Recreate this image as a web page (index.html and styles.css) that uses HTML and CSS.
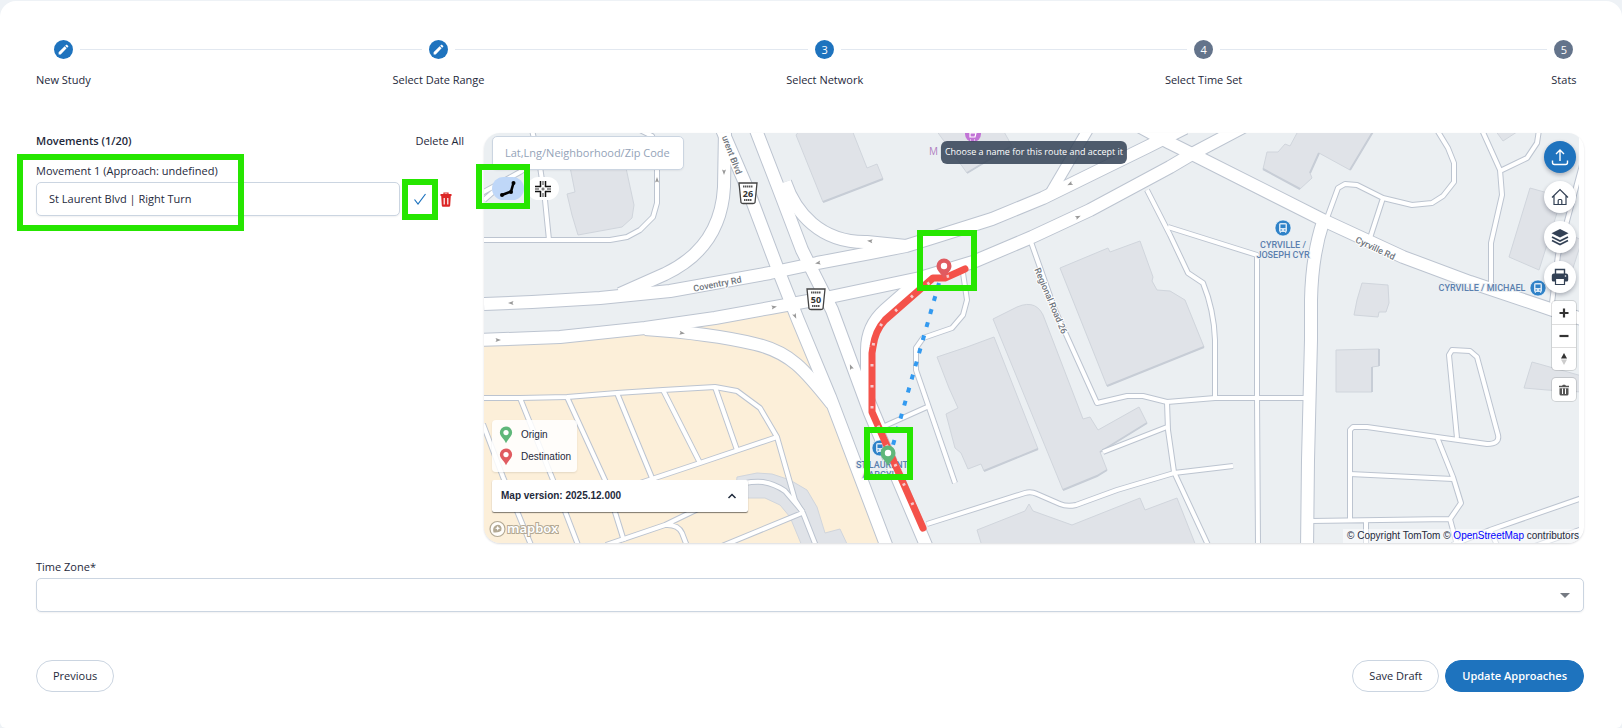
FILE: index.html
```
<!DOCTYPE html>
<html lang="en">
<head>
    <meta charset="UTF-8">
    <meta name="viewport" content="width=device-width, initial-scale=1.0">
    <title>Turning Movements - Select Network</title>
    <link rel="stylesheet" href="styles.css">
</head>
<body>
    <main class="card">
        <ol class="stepper">
            <li class="step done">
                <span class="step-icon"><svg width="13" height="13" viewBox="0 0 24 24"><path d="M3 17.2V21h3.8L17.8 9.900l-3.700-3.700zM20.700 7c.4-.4.4-1 0-1.400l-2.300-2.300c-.4-.4-1-.4-1.400 0l-1.900 1.900 3.700 3.700z" fill="currentColor"/></svg></span>
                <span class="step-label">New Study</span>
            </li>
            <li class="step done">
                <span class="step-icon"><svg width="13" height="13" viewBox="0 0 24 24"><path d="M3 17.2V21h3.8L17.8 9.900l-3.700-3.700zM20.700 7c.4-.4.4-1 0-1.400l-2.300-2.300c-.4-.4-1-.4-1.400 0l-1.900 1.900 3.700 3.700z" fill="currentColor"/></svg></span>
                <span class="step-label">Select Date Range</span>
            </li>
            <li class="step active">
                <span class="step-icon">3</span>
                <span class="step-label">Select Network</span>
            </li>
            <li class="step">
                <span class="step-icon">4</span>
                <span class="step-label">Select Time Set</span>
            </li>
            <li class="step">
                <span class="step-icon">5</span>
                <span class="step-label">Stats</span>
            </li>
        </ol>

        <div class="network">
            <section class="movements">
                <div class="movements-header">
                    <h2>Movements (1/20)</h2>
                    <button class="link-btn" type="button">Delete All</button>
                </div>
                <div class="movement">
                    <label for="movement-1">Movement 1 (Approach: undefined)</label>
                    <div class="movement-row">
                        <input class="field" id="movement-1" type="text" value="St Laurent Blvd | Right Turn">
                        <button class="icon-btn accept" type="button" aria-label="Accept">
                            <svg width="14" height="14" viewBox="0 0 14 14"><path d="M1.500 7.500 5 12 12.500 2" fill="none" stroke="currentColor" stroke-width="1.200"/></svg>
                            <span class="marker marker-accept"></span>
                        </button>
                        <button class="icon-btn delete" type="button" aria-label="Delete movement">
                            <svg width="12" height="15" viewBox="0 0 12 15"><path d="M4 2V1h4v1" fill="none" stroke="currentColor" stroke-width="1.200"/><path d="M.5 2h11v2H.5zM1.200 4h9.600l-.6 9.500q-.1 1.200-1.200 1.200H3q-1.100 0-1.200-1.200z" fill="currentColor"/><path d="M4.200 6v6.500M7.800 6v6.500" stroke="#fff" stroke-width="1.200"/></svg>
                        </button>
                    </div>
                    <span class="marker marker-name"></span>
                </div>
            </section>

            <section class="map">
                <div class="map-frame">
                    <svg class="map-canvas" viewBox="484 133 1095 410" preserveAspectRatio="xMidYMid slice">
                        <defs>
                            <g id="roads-main">
                                <path d="M484 304 532 302 600 298 670 291 770 273 817 263 870 253 906 246 938 236 992 219 1043 198 1100 170 1147 147 1185 128"/>
                                <path d="M480 340 560 337 645 328 715 318 770 308 830 297 920 278 973 262 1032 237 1090 210 1170 167 1192 154 1245 126"/>
                                <path d="M1135 124 1170 143 1192 154 1323 220 1403 257 1470 282 1553 310 1585 320"/>
                                <path d="M1323 222 Q1312 255 1311 300L1311 340 1308 460 1307 550"/>
                                <path d="M720 125 748 190 777 267 798 320 830 397 888 550"/>
                                <path d="M754 125 778 187 802 250 832 310 870 413 928 550"/>
                                <path d="M785 182C795 212 820 243 867 242L906 246"/>
                                <path d="M725 130 724 187C722 225 705 255 665 274L620 294"/>
                                <path d="M645 329 C690 332 730 338 755 344 790 352 805 370 832 404"/>
                                <path d="M918 281 885 310Q867 326 867 350L867 397 880 428"/>
                            </g>
                            <g id="roads-link">
                                <path d="M1050 194 1090 126"/>
                            </g>
                            <g id="roads-local">
                                <path d="M484 240H610L627 237 640 230 653 217 657 203V150L652 136 640 130"/>
                                <path d="M549 240 545 200 539 160 532 130M480 194 520 172 545 155M484 200 500 186"/>
                                <path d="M1031 242 1055 310 1097 403 1127 396H1143L1167 402 1215 398 1305 398"/>
                                <path d="M1167 402 1168 430 1174 472 1208 545M1167 427 1103 452"/>
                                <path d="M1233 466 1174 473 1117 490 1076 505Q1067 507 1060 504L1037 494Q1031 491 1025 493L927 524"/>
                                <path d="M1147 190 1170 235 1188 273 1203 283Q1214 310 1215 340V397"/>
                                <path d="M1168 227 1257 255V398L1258 545"/>
                                <path d="M1327 218 1338 188 1345 184 1357 185 1383 198 1412 205 1432 203 1443 196 1454 182V163L1448 148 1437 130M1383 198 1370 238"/>
                                <path d="M1482 130 1500 170 1502 195 1491 243V287M1500 171 1527 158 1537 143 1539 130"/>
                                <path d="M1582 165 1558 255 1552 303"/>
                                <path d="M1350 520V430L1353 427H1367L1437 437 1487 444Q1500 444 1498 435L1477 357 1470 351 1452 350 1449 355 1457 438"/>
                                <path d="M1437 437 1453 477 1461 503 1450 519 1457 545M1350 474 1453 479M1311 521 1450 519M1366 520V545"/>
                                <path d="M1582 498 1490 530 1452 545M1490 530 1497 545M1582 529 1535 546"/>
                                <path d="M963 273 967 300 963 315 952 328 923 338 916 348V370L955 483M927 407 878 429"/>
                                <path d="M480 398H520L567 397 617 393 663 390 715 387 737 391 760 408 777 437 795 500 803 513 816 546"/>
                                <path d="M520 398 553 480 578 545M567 397 605 480 624 541M617 393 652 478M663 390 700 463M715 387 737 450"/>
                                <path d="M640 483 700 463 777 437M483 424 503 477 531 545M606 545 665 525 700 508 735 487Q745 481 763 482 775 484 785 491L803 512M665 525Q678 524 682 533L687 546M722 546 802 513"/>
                            </g>
                            <path id="arrow" d="M-2.500-2 3 0-2.500 2-1.500 0z"/>
                            <g id="station">
                                <circle r="8" fill="#2f82c8" stroke="#fff" stroke-opacity=".6"/>
                                <rect x="-4" y="-5" width="8" height="9" rx="1.500" fill="#d6e6f5"/>
                                <path d="M-2.500-3.500h5v3.500h-5zM-2.500 1.500h1.500v1h-1.500zM1 1.500h1.500v1H1z" fill="#2f82c8"/>
                                <path d="M-3 5l1-1.500M3 5 2 3.500" stroke="#d6e6f5"/>
                            </g>
                            <g id="shield">
                                <path d="M-9-10H9L7 9.500Q6.500 10.500 5 10.500H-5Q-6.500 10.500-7 9.500z" fill="#fff" stroke="#444" stroke-width="1.300"/>
                                <path d="M-5-6.500H5M-4 7H4" stroke="#555" stroke-width="2" stroke-dasharray="1.500 .5"/>
                            </g>
                            <path id="pin" d="M0 12C-2 7-7.500 4-7.500-1A7.500 7.500 0 0 1 7.500-1C7.500 4 2 7 0 12z"/>
                        </defs>

                        <rect class="land" x="0" y="0" width="2200" height="900"/>
                        <path class="commercial" d="M300 340H484L645 328 788 306 882 543V900H300z"/>
                        <path class="building" d="M737 477 757 473 772 474 790 480 807 490 817 507 825 533 840 529 848 546H802L790 517 780 505 765 498H735z"/>

                        <g class="building">
                            <path d="M570 167 626 168 634 205 632 218 622 227 578 235 572 215 567 194 575 192z"/>
                            <path d="M796 135 800 130H852L867 168 877 164 883 179 823 202z"/>
                            <path d="M936 130H1003L1012 146 967 173z"/>
                            <path d="M1060 268 1108 248 1110 252 1140 241 1153 277 1152 281 1157 290 1170 291 1185 300 1204 347 1107 386z"/>
                            <path d="M993 319 1017 307Q1038 298 1045 320L1083 419 1090 417 1098 430 1139 407 1147 423 1100 452 1107 470 1097 476 1063 490z"/>
                            <path d="M937 357 967 347 994 337 1038 449 984 471 981 464 968 469 961 453 955 448 946 414 958 408 949 388z"/>
                            <path d="M977 530 1025 511 1029 504 1033 511 1072 525 1140 498 1145 510 1177 498 1196 546H982z"/>
                            <path d="M1297 133 1300 128H1375L1350 170 1319 153 1310 173 1312 178 1300 189 1263 169 1267 152 1278 152 1285 144 1290 146z"/>
                            <path d="M1362 283 1388 285 1389 303 1386 312H1379L1378 317 1354 315 1357 300z"/>
                            <path d="M1336 350 1379 349V366L1372 367V392H1336z"/>
                            <path d="M1530 188 1562 197 1539 270 1509 257z"/>
                            <path d="M1532 362 1582 376V392L1547 390 1524 388z"/>
                            <path d="M1495 130 1503 141 1520 130zM1582 240 1573 268 1555 262 1570 235z"/>
                        </g>
                        <path class="building-edge" d="M823 202 883 179M967 173 1010 147M1107 386 1204 347M984 471 1038 449M1063 490 1097 476 1107 470M1100 452 1147 423M1350 170 1374 130M1319 153 1310 173M1263 169 1300 189M1372 392V367M1379 366V349"/>

                        <use class="casing local" href="#roads-local"/>
                        <use class="casing link" href="#roads-link"/>
                        <use class="casing main" href="#roads-main"/>
                        <use class="surface local" href="#roads-local"/>
                        <use class="surface link" href="#roads-link"/>
                        <use class="surface main" href="#roads-main"/>

                        <g class="arrows">
                            <use href="#arrow" transform="translate(511 303) rotate(180)"/>
                            <use href="#arrow" transform="translate(498 340)"/>
                            <use href="#arrow" transform="translate(682 333) rotate(8)"/>
                            <use href="#arrow" transform="translate(657 180) rotate(-90)"/>
                            <use href="#arrow" transform="translate(724 172) rotate(90)"/>
                            <use href="#arrow" transform="translate(870 241) rotate(185)"/>
                            <use href="#arrow" transform="translate(818 263) rotate(170)"/>
                            <use href="#arrow" transform="translate(774 307) rotate(-10)"/>
                            <use href="#arrow" transform="translate(795 316) rotate(65)"/>
                            <use href="#arrow" transform="translate(1070 184) rotate(153)"/>
                            <use href="#arrow" transform="translate(1078 217) rotate(-25)"/>
                            <use href="#arrow" transform="translate(851 367) rotate(-112)"/>
                        </g>

                        <g class="street-names">
                            <text transform="translate(718 287) rotate(-11)">Coventry Rd</text>
                            <text transform="translate(729 156) rotate(69)">urent Blvd</text>
                            <text transform="translate(1374 251) rotate(25)">Cyrville Rd</text>
                            <text transform="translate(1048 302) rotate(67)">Regional Road 26</text>
                        </g>
                        <g class="station-names">
                            <text x="1283" y="248">CYRVILLE /</text>
                            <text x="1283" y="258">JOSEPH CYR</text>
                            <text x="1482" y="291">CYRVILLE / MICHAEL</text>
                            <text x="882" y="468">ST LAURENT</text>
                            <text x="882" y="478">/ ARGYLE</text>
                        </g>
                        <use href="#station" x="1283" y="228"/>
                        <use href="#station" x="1538" y="288"/>
                        <use href="#station" x="880" y="448"/>
                        <text class="poi-name" x="929" y="155">M</text>
                        <circle cx="973" cy="134" r="8" fill="#c274d6"/>
                        <path d="M970 133h6l-1 4h-5zM970 140h1M974 140h1" fill="none" stroke="#fff" stroke-width="1.200"/>

                        <use href="#shield" x="748" y="193"/>
                        <use href="#shield" x="816" y="299"/>
                        <g class="shield-no">
                            <text x="748" y="197">26</text>
                            <text x="816" y="303">50</text>
                        </g>

                        <!-- origin / destination link and the snapped route -->
                        <path d="M939 283 893 445" fill="none" stroke="#339af0" stroke-width="4" stroke-dasharray="5 8.600"/>
                        <path d="M965 269 945 278H933L917 292 885 320Q875 331 873 347L872 353V412L923 528" fill="none" stroke="#f4524a" stroke-width="7" stroke-linecap="round" stroke-linejoin="round"/>
                        <path d="M949 276 933 280 917 292 885 320Q875 331 873 347L872 353V412L920 521" fill="none" stroke="#f6c9cc" stroke-width="3" stroke-dasharray="2.500 18.500"/>
                        <use href="#pin" x="944" y="267" fill="#e05b60"/>
                        <circle cx="944" cy="266" r="3.200" fill="#fff"/>
                        <use href="#pin" x="888" y="454" fill="#5fb77a"/>
                        <circle cx="888" cy="453" r="3.200" fill="#fff"/>

                        <rect class="highlight" x="920" y="233" width="54" height="55"/>
                        <rect class="highlight" x="867" y="430" width="43" height="47"/>
                    </svg>

                    <div class="map-search">
                        <input class="field" type="text" placeholder="Lat,Lng/Neighborhood/Zip Code" aria-label="Search location">
                        <div class="draw-tools">
                            <button class="tool selected" type="button" aria-label="Draw route">
                                <svg width="20" height="20" viewBox="0 0 20 20"><path d="M4 16 13 12.500 15.500 4" fill="none" stroke="#000" stroke-width="2.600"/><circle cx="4" cy="16" r="2"/><circle cx="13" cy="13" r="2"/><circle cx="15.500" cy="4" r="2"/></svg>
                            </button>
                            <button class="tool" type="button" aria-label="Select intersection">
                                <svg width="18" height="18" viewBox="0 0 18 18"><path d="M6.500 1v5.500H1M11.500 1v5.500H17M6.500 17v-5.500H1M11.500 17v-5.500H17" fill="none" stroke="#111" stroke-width="1.500"/><path d="M9 1v4M9 13v4M1 9h4M13 9h4M9 7.500v3M7.500 9h3" stroke="#777" stroke-width="1.500"/></svg>
                            </button>
                        </div>
                    </div>

                    <div class="map-hint" role="status">Choose a name for this route and accept it</div>

                    <div class="map-actions">
                        <button class="round-btn primary" type="button" aria-label="Upload">
                            <svg width="18" height="18" viewBox="0 0 18 18"><path d="M9 13V2M5 6l4-4 4 4M1.500 12.500v2q0 2 2 2h11q2 0 2-2v-2" fill="none" stroke="currentColor" stroke-width="1.400"/></svg>
                        </button>
                        <button class="round-btn" type="button" aria-label="Home">
                            <svg width="18" height="18" viewBox="0 0 18 18"><path d="M1 9.500 9 1.500l8 8M3 8v8.500h12V8M7.200 16.500v-4q0-1 1-1h1.600q1 0 1 1v4" fill="none" stroke="currentColor" stroke-width="1.200"/></svg>
                        </button>
                        <button class="round-btn" type="button" aria-label="Layers">
                            <svg width="18" height="18" viewBox="0 0 18 18"><path d="M9 1 17.500 5.200 9 9.500.5 5.200z" fill="currentColor"/><path d="M1 9l8 4 8-4M1 12.500l8 4 8-4" fill="none" stroke="currentColor" stroke-width="1.700"/></svg>
                        </button>
                        <button class="round-btn" type="button" aria-label="Print">
                            <svg width="18" height="18" viewBox="0 0 18 18"><path d="M4.500 6V1.500h9V6" fill="none" stroke="currentColor" stroke-width="1.400"/><path d="M3 5.500h12q2.200 0 2.200 2.200V12q0 1.500-1.500 1.500H2.300Q.8 13.500.8 12V7.700q0-2.200 2.200-2.200z" fill="currentColor"/><path d="M4.500 10.500h9v6h-9z" fill="#fff" stroke="currentColor" stroke-width="1.200"/><circle cx="14.500" cy="8" r=".8" fill="#fff"/></svg>
                        </button>
                        <div class="ctrl-group">
                            <button type="button" aria-label="Zoom in"><svg width="12" height="12" viewBox="0 0 12 12"><path d="M6 1.500v9M1.500 6h9" stroke="#333" stroke-width="2.200"/></svg></button>
                            <button type="button" aria-label="Zoom out"><svg width="12" height="12" viewBox="0 0 12 12"><path d="M1.500 6h9" stroke="#333" stroke-width="2.200"/></svg></button>
                            <button type="button" aria-label="Reset north"><svg width="12" height="14" viewBox="0 0 12 14"><path d="M3 6.500 6 1l3 5.500z" fill="#333"/><path d="M3 7.500 6 13l3-5.500z" fill="#ccc"/></svg></button>
                        </div>
                        <div class="ctrl-group">
                            <button type="button" aria-label="Delete shape"><svg width="12" height="12" viewBox="0 0 12 12"><path d="M1 1.800h3L5 .8h2l1 1h3v1.400H1zM1.500 4.200h9V10q0 1.500-1.500 1.500H3Q1.500 11.500 1.500 10z" fill="#555"/><path d="M4.500 4.500V10M7.500 4.500V10" stroke="#fff"/></svg></button>
                        </div>
                    </div>

                    <div class="map-bottom">
                        <ul class="legend">
                            <li><svg width="14" height="18" viewBox="-8 -9 16 22"><use href="#pin" fill="#5fb77a"/><circle cy="-1" r="3.200" fill="#fff"/></svg>Origin</li>
                            <li><svg width="14" height="18" viewBox="-8 -9 16 22"><use href="#pin" fill="#e05b60"/><circle cy="-1" r="3.200" fill="#fff"/></svg>Destination</li>
                        </ul>
                        <button class="map-version" type="button" aria-expanded="false">
                            Map version: 2025.12.000
                            <svg width="10" height="6" viewBox="0 0 10 6"><path d="M1.500 5 5 1.500 8.500 5" fill="none" stroke="currentColor" stroke-width="1.500"/></svg>
                        </button>
                        <a class="mapbox-logo" href="#" aria-label="mapbox">
                            <svg width="70" height="18" viewBox="0 0 70 18"><circle cx="8.500" cy="9" r="7.500" fill="#fff" fill-opacity=".85" stroke="#b3a994" stroke-width="1.200"/><path d="M4.500 12.500Q3 7 7 5.200q3-1.200 4.800 1t.4 4.600q-2.200 2.200-7.700 1.700z" fill="#b3a994"/><path d="M8.700 5.800l.8 1.700 1.800.8-1.800.8-.8 1.700-.8-1.700-1.800-.8 1.800-.8z" fill="#fff"/><text class="mapbox-word" x="18" y="13">mapbox</text></svg>
                        </a>
                    </div>

                    <p class="attribution">© Copyright TomTom © <a href="#">OpenStreetMap</a> contributors</p>
                </div>
                <span class="marker marker-tool"></span>
            </section>
        </div>

        <div class="timezone">
            <label for="timezone">Time Zone*</label>
            <div class="select-wrap">
                <select class="field" id="timezone"><option value=""></option></select>
            </div>
        </div>

        <div class="actions">
            <button class="btn" type="button">Previous</button>
            <div class="actions-right">
                <button class="btn" type="button">Save Draft</button>
                <button class="btn btn-primary" type="button">Update Approaches</button>
            </div>
        </div>
    </main>
</body>
</html>
```
FILE: styles.css
```
:root {
    --primary: #1e73be;
    --slate: #64748b;
    --border: #cbd5e1;
    --text: #1e293b;
    --marker: #26e600;
}

* {
    margin: 0;
    padding: 0;
    box-sizing: border-box;
}

body {
    padding-top: 1px;
    background: #eef2f6;
    color: var(--text);
    font-family: 'Open Sans', 'Noto Sans', sans-serif;
    font-size: 11px;
    font-weight: 500;
    line-height: 16px;
}

button,
input,
select {
    font: inherit;
    color: inherit;
}

button {
    border: none;
    background: none;
    cursor: pointer;
}

svg {
    display: block;
}

ol,
ul {
    list-style: none;
}

.card {
    min-height: calc(100vh - 1px);
    padding: 39px 38px 36px 36px;
    background: #fff;
    border-radius: 16px 16px 6px 6px;
}

/* Stepper */
.stepper {
    position: relative;
    display: flex;
    justify-content: space-between;
    margin-bottom: 44px;
}

.stepper::before {
    content: '';
    position: absolute;
    top: 9px;
    left: 28px;
    right: 20px;
    height: 1px;
    background: #e2e8f0;
}

.step {
    position: relative;
    display: flex;
    flex-direction: column;
    align-items: center;
    gap: 12px;
    min-width: 40px;
}

.step-icon {
    display: flex;
    align-items: center;
    justify-content: center;
    width: 19px;
    height: 19px;
    border-radius: 50%;
    background: var(--slate);
    box-shadow: 0 0 0 7px #fff;
    color: #fff;
}

.step.done .step-icon,
.step.active .step-icon {
    background: var(--primary);
}

.step-label {
    line-height: 18px;
}

/* Movements list and map */
.network {
    display: grid;
    grid-template-columns: minmax(0, 430px) minmax(0, 1fr);
    gap: 18px;
    margin-bottom: 16px;
}

.movements-header {
    display: flex;
    justify-content: space-between;
    margin-bottom: 14px;
}

.movements-header h2 {
    font-size: 11px;
    font-weight: 600;
}

.link-btn {
    padding-right: 2px;
}

.movement {
    position: relative;
}

.movement label,
.timezone label {
    display: block;
    margin-bottom: 3px;
}

.movement-row {
    display: flex;
    align-items: center;
    gap: 4px;
}

.field {
    display: block;
    width: 100%;
    height: 34px;
    padding: 0 12px 1px;
    background: #fff;
    border: 1px solid var(--border);
    border-radius: 5px;
    box-shadow: 0 1px 2px rgba(15, 23, 42, 0.06);
    font-weight: 400;
    outline: none;
}

.field::placeholder {
    color: #94a3b8;
}

.movement-row .field {
    flex: 1;
}

.icon-btn {
    position: relative;
    display: flex;
    align-items: center;
    justify-content: center;
    width: 32px;
    height: 32px;
}

.icon-btn.accept {
    color: var(--primary);
}

.icon-btn.delete {
    width: 12px;
    margin-right: 14px;
    color: #dc2626;
}

.marker {
    position: absolute;
    border: 6px solid var(--marker);
    pointer-events: none;
}

.marker-name {
    top: -9px;
    left: -19px;
    width: 227px;
    height: 77px;
}

.marker-accept {
    inset: -4px -2px -5px;
}

.marker-tool {
    top: 31px;
    left: -8px;
    width: 54px;
    height: 45px;
}

.map {
    position: relative;
}

.map-frame {
    position: relative;
    height: 410px;
    padding-right: 5px;
    border-radius: 16px;
    box-shadow: 0 1px 2px rgba(15, 23, 42, 0.15);
    overflow: hidden;
}

.map-canvas {
    width: 100%;
    height: 100%;
}

.land {
    fill: #ebeff2;
}

.commercial {
    fill: #fcefd9;
}

.building {
    fill: #e0e3e8;
    stroke: #d0d5dc;
}

.building-edge {
    fill: none;
    stroke: #c7cdd6;
    stroke-width: 2;
}

.casing,
.surface {
    fill: none;
    stroke-linejoin: round;
}

.casing {
    stroke: #bcc4d0;
}

.surface {
    stroke: #fff;
}

.casing.main {
    stroke-width: 14px;
}

.surface.main {
    stroke-width: 12px;
}

.casing.link {
    stroke-width: 12px;
}

.surface.link {
    stroke-width: 10px;
}

.casing.local {
    stroke-width: 6px;
}

.surface.local {
    stroke-width: 4px;
}

.arrows {
    fill: #999;
}

.street-names {
    fill: #6f757d;
    font-family: Roboto, sans-serif;
    font-size: 9px;
    text-anchor: middle;
    stroke: #fff;
    stroke-width: 2px;
    paint-order: stroke;
}

.station-names {
    fill: #5b7fae;
    font-family: Roboto, sans-serif;
    font-size: 9px;
    text-anchor: middle;
    stroke: #ebeff2;
    stroke-width: 2px;
    paint-order: stroke;
}

.poi-name {
    fill: #b07fc0;
    font-size: 10px;
}

.shield-no {
    fill: #333;
    font-size: 9px;
    font-weight: 700;
    text-anchor: middle;
}

.highlight {
    fill: none;
    stroke: var(--marker);
    stroke-width: 6px;
}

/* Controls over the map */
.map-search {
    position: absolute;
    top: 3px;
    left: 8px;
    width: 192px;
}

.draw-tools {
    display: flex;
    gap: 3px;
    margin-top: 7px;
}

.tool {
    display: flex;
    align-items: center;
    justify-content: center;
    width: 32px;
    height: 23px;
    background: #fff;
    border-radius: 12px;
}

.tool.selected {
    background: #bfd7f8;
}

.map-hint {
    position: absolute;
    top: 8px;
    left: 50%;
    transform: translateX(-50%);
    padding: 3px 4px 4px;
    background: rgba(51, 65, 85, 0.85);
    border-radius: 6px;
    color: #fff;
    font-size: 9px;
    white-space: nowrap;
}

.map-actions {
    position: absolute;
    top: 8px;
    right: 8px;
    display: flex;
    flex-direction: column;
    align-items: flex-end;
    gap: 8px;
}

.round-btn {
    display: flex;
    align-items: center;
    justify-content: center;
    width: 32px;
    height: 32px;
    background: #fff;
    border-radius: 50%;
    box-shadow: 0 2px 4px rgba(15, 23, 42, 0.3);
    color: #334155;
}

.round-btn.primary {
    background: var(--primary);
    color: #fff;
}

.ctrl-group {
    width: 24px;
    background: #fff;
    border-radius: 4px;
    box-shadow: 0 0 0 1px rgba(0, 0, 0, 0.12);
}

.ctrl-group button {
    display: flex;
    align-items: center;
    justify-content: center;
    width: 24px;
    height: 23px;
}

.ctrl-group button + button {
    border-top: 1px solid #ddd;
}

.map-bottom {
    position: absolute;
    left: 8px;
    bottom: 5px;
    width: 256px;
}

.legend {
    width: max-content;
    margin-bottom: 8px;
    padding: 4px 6px 4px 7px;
    background: rgba(255, 255, 255, 0.85);
    border-radius: 4px;
    box-shadow: 0 1px 2px rgba(0, 0, 0, 0.1);
    font-family: 'Liberation Sans', sans-serif;
    font-size: 10px;
    font-weight: 400;
}

.legend li {
    display: flex;
    align-items: center;
    gap: 8px;
    height: 22px;
}

.map-version {
    display: flex;
    align-items: center;
    justify-content: space-between;
    width: 100%;
    height: 32px;
    padding: 0 11px 0 9px;
    background: #fff;
    border-radius: 2px;
    box-shadow: 0 1px 1px rgba(0, 0, 0, 0.5);
    font-family: 'Liberation Sans', sans-serif;
    font-size: 10px;
    font-weight: 700;
}

.mapbox-logo {
    display: block;
    margin: 8px 0 0 -3px;
}

.mapbox-word {
    fill: #fff;
    stroke: #b3a994;
    stroke-width: 2px;
    paint-order: stroke;
    font-family: 'Noto Sans', sans-serif;
    font-size: 13px;
    font-weight: 600;
}

.attribution {
    position: absolute;
    right: 5px;
    bottom: 0;
    padding-left: 4px;
    background: rgba(255, 255, 255, 0.5);
    font-family: 'Liberation Sans', sans-serif;
    font-size: 10px;
    font-weight: 400;
    line-height: 14px;
}

.attribution a {
    color: #00f;
    text-decoration: none;
}

/* Time zone */
.select-wrap {
    position: relative;
}

.select-wrap select {
    appearance: none;
}

.select-wrap::after {
    content: '';
    position: absolute;
    top: 15px;
    right: 14px;
    border: 5px solid transparent;
    border-top-color: #757a82;
    border-bottom: none;
    pointer-events: none;
}

.actions {
    display: flex;
    justify-content: space-between;
    margin-top: 48px;
}

.actions-right {
    display: flex;
    gap: 6px;
}

.btn {
    height: 32px;
    padding: 0 16px;
    border: 1px solid var(--border);
    border-radius: 16px;
}

.btn-primary {
    background: var(--primary);
    border-color: var(--primary);
    color: #fff;
    font-weight: 600;
}
```
